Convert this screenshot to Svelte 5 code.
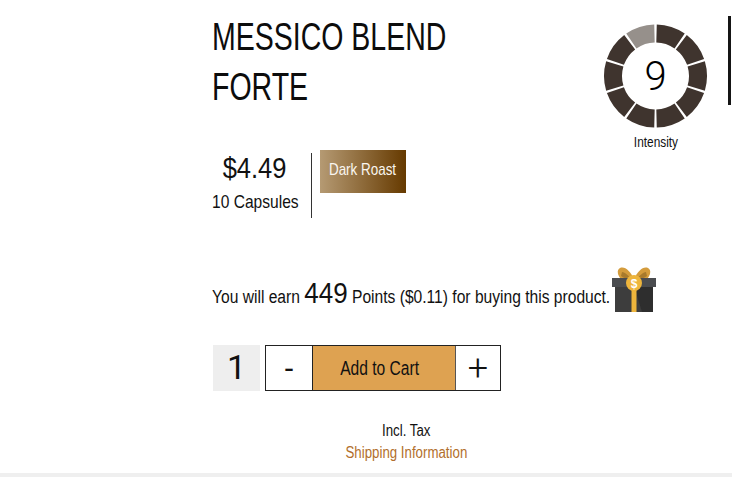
<script>
const SEGMENTS = 10;
const INTENSITY = 9;
const CX = 52.5, CY = 53, R1 = 51.5, R2 = 33.5;
const GAP = 2.2;

function pt(r, deg) {
  const a = ((deg - 90) * Math.PI) / 180;
  return `${(CX + r * Math.cos(a)).toFixed(2)} ${(CY + r * Math.sin(a)).toFixed(2)}`;
}

const segs = Array.from({ length: SEGMENTS }, (_, i) => {
  const a0 = i * 36 + GAP / 2 + 0.3;
  const a1 = (i + 1) * 36 - GAP / 2 - 0.3;
  return {
    d: `M${pt(R1, a0)} A${R1} ${R1} 0 0 1 ${pt(R1, a1)} L${pt(R2, a1)} A${R2} ${R2} 0 0 0 ${pt(R2, a0)} Z`,
    on: i < INTENSITY,
  };
});
</script>

<style>
  :global(body) { margin: 0; background: #fff; }
  .page {
    height: 473px; width: 732px; box-sizing: border-box; padding-left: 212px; overflow: hidden;
    font-family: "Liberation Sans", Arial, sans-serif; color: #111;
  }
  /* the reference face is a condensed Helvetica, nothing installed is that narrow */
  .squeeze { display: inline-block; white-space: nowrap; transform-origin: left center; }
  .mid { transform-origin: center center; }
  .top { display: flex; height: 218px; padding-top: 12px; box-sizing: border-box; }
  .info { width: 391px; }
  h1 { margin: 0; font-size: 38px; line-height: 50px; font-weight: 400; color: #0c0c0c; }
  h1 .squeeze { transform: scaleX(0.75); }
  .price-row { display: flex; margin-top: 38px; }
  .price { width: 99px; height: 65px; border-right: 1px solid #333; margin-top: 3px; text-align: center; }
  .amount { font-size: 30px; line-height: 30px; margin-right: 13px; display: flex; justify-content: center; }
  .amount .squeeze { transform: scaleX(0.85); }
  .caps { font-size: 19px; line-height: 22px; margin-top: 8px; text-align: left; }
  .caps .squeeze { transform: scaleX(0.82); }
  .roast {
    width: 86px; height: 43px; margin-left: 8px; box-sizing: border-box; padding-top: 10px;
    background: linear-gradient(90deg, #b59a73, #663a00); color: #faf6f0;
    font-size: 17px; line-height: 20px; display: flex; justify-content: center;
  }
  .roast .squeeze { transform: scaleX(0.79); height: 20px; }
  .intensity { width: 106px; margin-top: 11px; font-size: 15px; line-height: 16px; }
  .ring { position: relative; width: 106px; height: 106px; margin-bottom: 5px; }
  .ring svg { display: block; }
  .ring span {
    position: absolute; inset: 0; padding: 2px 1px 0 0; display: flex; align-items: center; justify-content: center;
    font-family: Roboto, "Liberation Sans", sans-serif; font-size: 40px; font-weight: 300; color: #000;
  }
  .caption { display: flex; justify-content: center; padding-right: 1px; }
  .caption .squeeze { transform: scaleX(0.79); }
  .bar { width: 3px; height: 89px; background: #151515; margin: 4px 0 0 19px; }
  .earn { display: flex; align-items: flex-end; height: 50px; margin-top: 44px; font-size: 18px; line-height: 32px; }
  .earn .txt { width: 399px; height: 35px; }
  .earn .squeeze { transform: scaleX(0.867); }
  .earn b { font-weight: 400; font-size: 30px; }
  .gift { display: block; flex: none; margin-left: 1px; }
  .cart { display: flex; margin: 33px 0 0 1px; height: 46px; }
  .qty {
    width: 47px; background: #eee; text-align: center;
    font-family: Roboto, "Liberation Sans", sans-serif; font-size: 34px; font-weight: 400; line-height: 44px;
  }
  .group {
    display: flex; margin-left: 5px; width: 236px; box-sizing: border-box;
    border: 1px solid #222; height: 46px;
  }
  .group button { border: 0; padding: 0; margin: 0; background: #fff; color: #111; font-family: inherit; }
  .group .minus { flex: none; width: 46px; font-size: 30px; line-height: 40px; }
  .group .plus { flex: 1; font-family: Roboto, "Liberation Sans", sans-serif; font-weight: 300; font-size: 36px; line-height: 40px; }
  .group .add {
    flex: none; width: 144px; padding-right: 9px; background: #dea251; font-size: 20px;
    border-left: 1px solid #222; border-right: 1px solid #555;
  }
  .add .squeeze { transform: scaleX(0.78); }
  .note { width: 388px; margin-top: 29px; font-size: 16px; line-height: 22px; }
  .note p { margin: 0; display: flex; justify-content: center; }
  .note .squeeze { transform: scaleX(0.83); }
  .ship { color: #b26f2c; }
  .strip { height: 4px; background: #efefef; }
</style>

<div class="page">
  <div class="top">
    <div class="info">
      <h1><span class="squeeze">MESSICO BLEND<br />FORTE</span></h1>
      <div class="price-row">
        <div class="price">
          <div class="amount"><span class="squeeze mid">$4.49</span></div>
          <div class="caps"><span class="squeeze">10 Capsules</span></div>
        </div>
        <div class="roast"><span class="squeeze mid">Dark Roast</span></div>
      </div>
    </div>
    <div class="intensity">
      <div class="ring">
        <svg width="106" height="106" viewBox="0 0 106 106">
          {#each segs as s}
            <path d={s.d} fill={s.on ? "#3f342e" : "#96908b"} />
          {/each}
        </svg>
        <span>9</span>
      </div>
      <div class="caption"><span class="squeeze mid">Intensity</span></div>
    </div>
    <div class="bar"></div>
  </div>

  <div class="earn">
    <div class="txt"><span class="squeeze">You will earn <b>449</b> Points ($0.11) for buying this product.</span></div>
    <svg class="gift" width="44" height="46" viewBox="0 0 44 46">
      <path d="M22 13C18 5 13 0 8 2 4 4 6 10 9 13 13 16 19 15 22 13Z" fill="#d49c3c" />
      <path d="M22 13C26 5 31 0 36 2 40 4 38 10 35 13 31 16 25 15 22 13Z" fill="#d49c3c" />
      <path d="M10 6C13 6 17 10 19 13 15 13 11 12 9 10Z" fill="#a87a2c" />
      <path d="M34 6C31 6 27 10 25 13 29 13 33 12 35 10Z" fill="#a87a2c" />
      <rect x="3" y="20" width="38" height="26" fill="#3d3d3d" />
      <path d="M22 20H41V46H30Z" fill="#2e2e2e" />
      <rect x="0" y="12" width="44" height="9" fill="#4a4c4f" />
      <rect x="19.5" y="20" width="5" height="26" fill="#eeb53c" />
      <circle cx="22" cy="17" r="8" fill="#eeb53c" />
      <text x="22" y="21.5" text-anchor="middle" font-size="12" font-weight="700" fill="#fff" font-family="Liberation Sans, sans-serif">$</text>
    </svg>
  </div>

  <div class="cart">
    <div class="qty">1</div>
    <div class="group">
      <button class="minus">-</button>
      <button class="add"><span class="squeeze mid">Add to Cart</span></button>
      <button class="plus">+</button>
    </div>
  </div>

  <div class="note">
    <p><span class="squeeze mid">Incl. Tax</span></p>
    <p class="ship"><span class="squeeze mid">Shipping Information</span></p>
  </div>
</div>
<div class="strip"></div>
